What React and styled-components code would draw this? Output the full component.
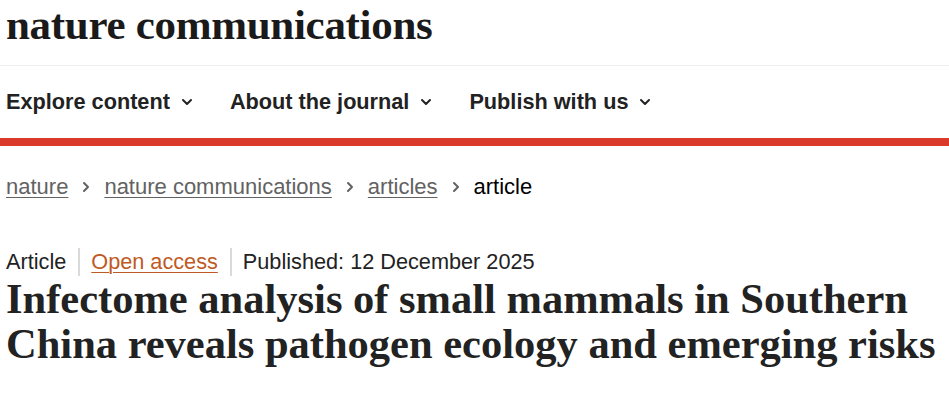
import React from 'react';
import styled, { createGlobalStyle } from 'styled-components';

const GlobalStyle = createGlobalStyle`
	html, body {
		margin: 0;
		padding: 0;
		background: #fff;
	}
	body {
		font-family: 'Liberation Sans', Arial, sans-serif;
		color: #222;
	}
`

const Page = styled.div`
	width: 949px;
	height: 404px;
	overflow: hidden;
	background: #fff;
`

const Masthead = styled.header`
	height: 65px;
	border-bottom: 1px solid #eeeeee;
	padding-left: 6px;
	display: flex;
	align-items: flex-start;
`

const Logo = styled.a`
	font-family: 'Liberation Serif', 'Times New Roman', serif;
	font-weight: 700;
	font-size: 43px;
	line-height: 1;
	letter-spacing: -0.3px;
	color: #1a1a1a;
	text-decoration: none;
	margin-top: 3px;
`

const NavBar = styled.nav`
	height: 72px;
	display: flex;
	align-items: center;
	gap: 37px;
	padding-left: 6px;
	border-bottom: 8px solid #d93a2b;
`

const NavItem = styled.button`
	display: flex;
	align-items: center;
	gap: 11px;
	background: none;
	border: 0;
	padding: 0;
	font-family: 'Liberation Sans', Arial, sans-serif;
	font-weight: 700;
	font-size: 21.7px;
	color: #222;
	cursor: pointer;
`

const Chevron = ({ right }) => (
	<svg width="12" height="12" viewBox="0 0 12 12" fill="none">
		{right
			? <path d="M4 2l4 4-4 4" stroke="currentColor" strokeWidth="2" strokeLinecap="round" strokeLinejoin="round" />
			: <path d="M2 4l4 4 4-4" stroke="currentColor" strokeWidth="2" strokeLinecap="round" strokeLinejoin="round" />}
	</svg>
)

const Breadcrumbs = styled.ol`
	list-style: none;
	margin: 0;
	padding: 27px 0 0 6px;
	display: flex;
	align-items: center;
	font-size: 22px;
	line-height: 28px;
`

const Crumb = styled.li`
	display: flex;
	align-items: center;
	color: ${p => p.current ? '#000' : '#626262'};

	a {
		color: inherit;
		text-decoration: underline;
		text-underline-offset: 3px;
		text-decoration-thickness: 1px;
	}

	svg {
		color: #626262;
		margin: 0 12px;
	}
`

const ArticleHeader = styled.section`
	padding: 47px 0 0 6px;
`

const MetaList = styled.ul`
	list-style: none;
	margin: 0;
	padding: 0;
	display: flex;
	align-items: center;
	font-size: 21.7px;
	line-height: 28px;
	color: #222;
`

const MetaItem = styled.li`
	display: flex;
	align-items: center;

	& + & {
		border-left: 2px solid #dadada;
		margin-left: 12px;
		padding-left: 11px;
	}

	a {
		color: #c05a24;
		text-decoration: underline;
		text-underline-offset: 3px;
		text-decoration-thickness: 1px;
	}
`

const Title = styled.h1`
	margin: 0;
	font-family: 'Liberation Serif', 'Times New Roman', serif;
	font-weight: 700;
	font-size: 42.5px;
	line-height: 45px;
	letter-spacing: 0;
	color: #222;
`

export default function App() {
	return (
		<Page>
			<GlobalStyle />
			<Masthead>
				<Logo href="#">nature communications</Logo>
			</Masthead>
			<NavBar>
				<NavItem>Explore content <Chevron /></NavItem>
				<NavItem>About the journal <Chevron /></NavItem>
				<NavItem>Publish with us <Chevron /></NavItem>
			</NavBar>
			<Breadcrumbs>
				<Crumb><a href="#">nature</a><Chevron right /></Crumb>
				<Crumb><a href="#">nature communications</a><Chevron right /></Crumb>
				<Crumb><a href="#">articles</a><Chevron right /></Crumb>
				<Crumb current>article</Crumb>
			</Breadcrumbs>
			<ArticleHeader>
				<MetaList>
					<MetaItem>Article</MetaItem>
					<MetaItem><a href="#">Open access</a></MetaItem>
					<MetaItem>Published: 12 December 2025</MetaItem>
				</MetaList>
				<Title>
					Infectome analysis of small mammals in Southern<br />
					China reveals pathogen ecology and emerging risks
				</Title>
			</ArticleHeader>
		</Page>
	)
}
